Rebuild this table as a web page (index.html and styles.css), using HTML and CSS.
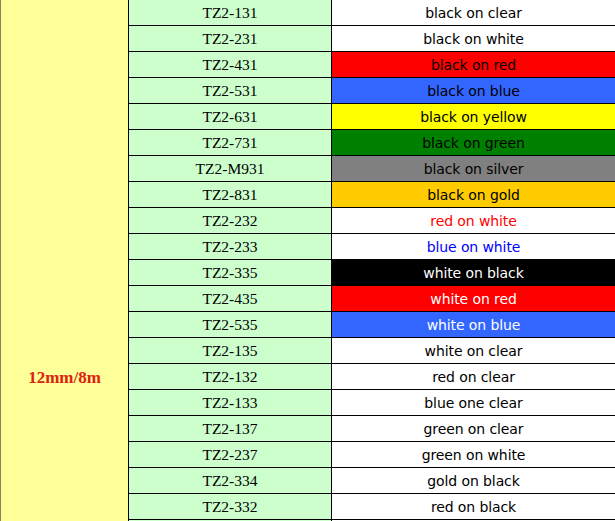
FILE: index.html
```html
<!DOCTYPE html>
<html>
<head>
<meta charset="utf-8">
<link rel="stylesheet" href="styles.css">
</head>
<body>
<div class="tape-table">
  <div class="size-cell"><span class="size-label">12mm/8m</span></div>
  <div class="model">TZ2-131</div><div class="desc">black on clear</div>
  <div class="model">TZ2-231</div><div class="desc">black on white</div>
  <div class="model">TZ2-431</div><div class="desc bg-red">black on red</div>
  <div class="model">TZ2-531</div><div class="desc bg-blue">black on blue</div>
  <div class="model">TZ2-631</div><div class="desc bg-yellow">black on yellow</div>
  <div class="model">TZ2-731</div><div class="desc bg-green">black on green</div>
  <div class="model">TZ2-M931</div><div class="desc bg-silver">black on silver</div>
  <div class="model">TZ2-831</div><div class="desc bg-gold">black on gold</div>
  <div class="model">TZ2-232</div><div class="desc fg-red">red on white</div>
  <div class="model">TZ2-233</div><div class="desc fg-blue">blue on white</div>
  <div class="model">TZ2-335</div><div class="desc bg-black fg-white">white on black</div>
  <div class="model">TZ2-435</div><div class="desc bg-red fg-white">white on red</div>
  <div class="model">TZ2-535</div><div class="desc bg-blue fg-white">white on blue</div>
  <div class="model">TZ2-135</div><div class="desc">white on clear</div>
  <div class="model">TZ2-132</div><div class="desc">red on clear</div>
  <div class="model">TZ2-133</div><div class="desc">blue one clear</div>
  <div class="model">TZ2-137</div><div class="desc">green on clear</div>
  <div class="model">TZ2-237</div><div class="desc">green on white</div>
  <div class="model">TZ2-334</div><div class="desc">gold on black</div>
  <div class="model">TZ2-332</div><div class="desc">red on black</div>
  <div class="model"></div><div class="desc"></div>
</div>
</body>
</html>
```
FILE: styles.css
```css
html, body {
  margin: 0;
  padding: 0;
  width: 615px;
  height: 521px;
  overflow: hidden;
  background: #ffffff;
}

.tape-table {
  display: grid;
  grid-template-columns: 127px 202px 1fr;
  grid-auto-rows: 25px;
  gap: 1px;
  background: #000000;
  border-left: 1px solid #85855a;
  width: 614px;
}

.size-cell {
  grid-column: 1;
  grid-row: 1 / span 21;
  background: #ffff99;
  padding-top: 368px;
  text-align: center;
}

.size-label {
  font-family: "Liberation Serif", "Times New Roman", serif;
  font-weight: bold;
  font-size: 17px;
  color: #dd2211;
}

.model {
  background: #ccffcc;
  display: flex;
  align-items: center;
  justify-content: center;
  padding-top: 1px;
  font-family: "Liberation Serif", "Times New Roman", serif;
  font-size: 15.5px;
  color: #000000;
}

.desc {
  background: #ffffff;
  display: flex;
  align-items: center;
  justify-content: center;
  padding-top: 1px;
  font-family: "DejaVu Sans", Verdana, sans-serif;
  font-size: 14px;
  letter-spacing: -0.1px;
  color: #000000;
}

.bg-red { background: #ff0000; }
.bg-blue { background: #3366ff; }
.bg-yellow { background: #ffff00; }
.bg-green { background: #008000; }
.bg-silver { background: #808080; }
.bg-gold { background: #ffcc00; }
.bg-black { background: #000000; }
.fg-red { color: #ff0000; }
.fg-blue { color: #0000ff; }
.fg-white { color: #ffffff; }
```
